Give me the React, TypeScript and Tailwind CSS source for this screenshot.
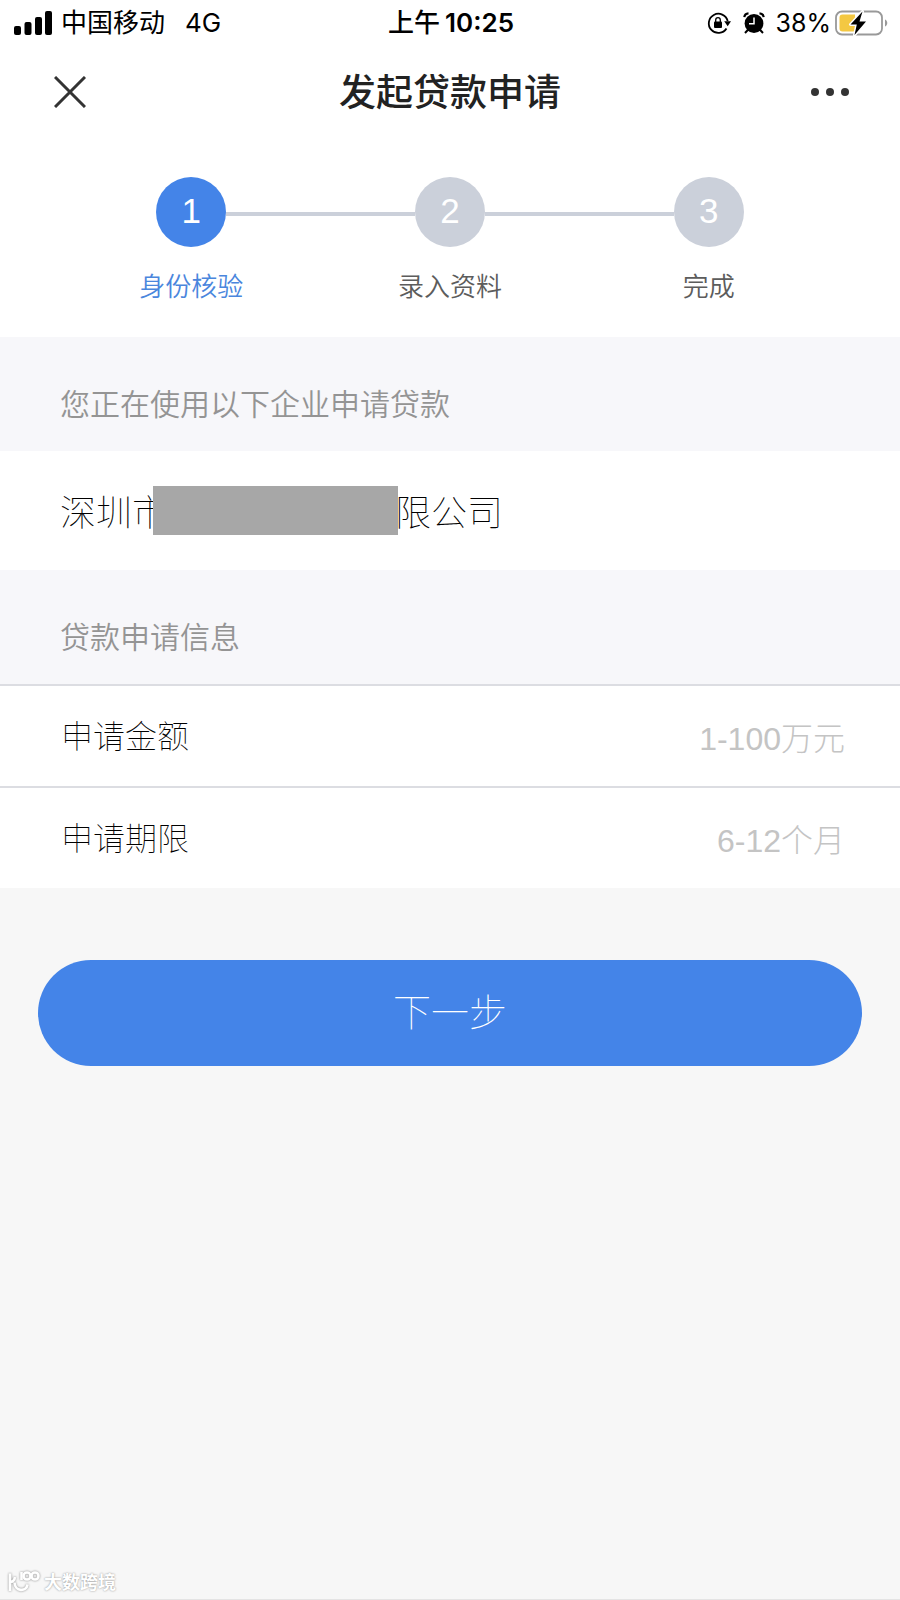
import React from "react";

const steps = [
  { n: 1, label: "身份核验" },
  { n: 2, label: "录入资料" },
  { n: 3, label: "完成" },
];

const fields = [
  { id: "amount", label: "申请金额", hint: "1-100万元" },
  { id: "term", label: "申请期限", hint: "6-12个月" },
];

function StatusBar() {
  return (
    <div className="grid h-[46px] grid-cols-[1fr_auto_1fr] items-center pr-3 pl-[14px] font-['Inter','Noto_Sans_CJK_SC',sans-serif] text-[26px] leading-none text-black">
      <div className="flex items-center">
        <svg className="mr-[9px] h-6 w-[38px]" viewBox="0 0 38 24" aria-hidden="true">
          <rect x="0" y="15" width="7" height="9" rx="2" />
          <rect x="10.500" y="11" width="7" height="13" rx="2" />
          <rect x="21" y="6" width="7" height="18" rx="2" />
          <rect x="31" y="0" width="7" height="24" rx="2" />
        </svg>
        <span className="mr-5">中国移动</span>
        <span>4G</span>
      </div>
      <div className="flex items-center gap-[5px] font-semibold">
        <span className="font-medium">上午</span>
        <span>10:25</span>
      </div>
      <div className="flex items-center justify-end">
        <svg className="mr-3 h-6 w-6" viewBox="0 0 24 24" fill="none" aria-hidden="true">
          <path d="M19.500 17.500A9.600 9.600 0 1 1 20.700 10" stroke="#000" strokeWidth="1.800" />
          <path d="M17.200 10.200h6.800l-3.300 5z" fill="#000" />
          <rect x="7" y="10.500" width="8" height="6.500" rx="1" fill="#000" />
          <path d="M8.700 11V9a2.300 2.300 0 0 1 4.600 0v2" stroke="#000" strokeWidth="1.300" />
        </svg>
        <svg className="mr-[11px] h-[22px] w-[22px]" viewBox="0 0 22 22" fill="none" aria-hidden="true">
          <circle cx="11" cy="11.500" r="9.400" fill="#000" />
          <path d="M1.300 5.200A4.500 4.500 0 0 1 5.500 1.300M20.700 5.200a4.500 4.500 0 0 0-4.200-3.900" stroke="#000" strokeWidth="2.200" />
          <path d="M4.800 18l-2.800 3M17.200 18l2.800 3" stroke="#000" strokeWidth="2" />
          <path d="M11 5.500v6.300H6" stroke="#fff" strokeWidth="1.500" />
        </svg>
        <span className="mr-1 text-[25px]">38%</span>
        <svg className="h-[26px] w-[53px]" viewBox="0 0 53 26" fill="none" aria-hidden="true">
          <rect x="1" y="1.500" width="46" height="23" rx="6" stroke="#999" strokeWidth="1.800" />
          <path d="M50 9.500c3 1.200 3 5.800 0 7z" fill="#999" />
          <path d="M7.500 4.500H20v17H7.500a3 3 0 0 1-3-3v-11a3 3 0 0 1 3-3z" fill="#f4c842" />
          <path d="M27.500 1.500L15.500 14.500h6.300L19.500 25 31 11.500h-6.500z" fill="#000" stroke="#fff" strokeWidth="3" strokeLinejoin="round" paintOrder="stroke" />
        </svg>
      </div>
    </div>
  );
}

function NavBar() {
  return (
    <header className="grid h-[92px] grid-cols-[1fr_auto_1fr] items-center px-[50px]">
      <button type="button" aria-label="关闭" className="flex h-10 w-10 items-center justify-center">
        <svg className="h-8 w-8" viewBox="0 0 32 32" aria-hidden="true">
          <path d="M1 1L31 31M31 1L1 31" stroke="#333" strokeWidth="3" />
        </svg>
      </button>
      <h1 className="pt-0.5 text-[37px] leading-none font-medium text-[#222]">发起贷款申请</h1>
      <button type="button" aria-label="更多" className="flex h-10 w-10 items-center justify-center justify-self-end">
        <svg className="h-2 w-10" viewBox="0 0 40 8" fill="#333" aria-hidden="true">
          <circle cx="5" cy="4" r="4" />
          <circle cx="20" cy="4" r="4" />
          <circle cx="35" cy="4" r="4" />
        </svg>
      </button>
    </header>
  );
}

function Steps() {
  return (
    <ol className="grid grid-cols-3 px-[62px] pt-[39px] pb-[30px]">
      {steps.map((s, i) => (
        <li key={s.n} className="flex flex-col items-center">
          <div className="flex w-full items-center">
            <span className={i === 0 ? "mt-1 h-1 flex-1" : "mt-1 h-1 flex-1 bg-[#cbd0da]"} />
            <span
              className={
                i === 0
                  ? "flex h-[70px] w-[70px] items-center justify-center rounded-full bg-[#4484e8] pb-1 text-[35px] leading-none text-white"
                  : "flex h-[70px] w-[70px] items-center justify-center rounded-full bg-[#cbd0da] pb-1 text-[35px] leading-none text-white"
              }
            >
              {s.n}
            </span>
            <span className={i === 2 ? "mt-1 h-1 flex-1" : "mt-1 h-1 flex-1 bg-[#cbd0da]"} />
          </div>
          <span
            className={
              i === 0
                ? "mt-5 text-[26px] leading-10 font-[350] text-[#4a86dd]"
                : "mt-5 text-[26px] leading-10 font-[350] text-[#5c5c5c]"
            }
          >
            {s.label}
          </span>
        </li>
      ))}
    </ol>
  );
}

function SectionTitle({ children }: { children: React.ReactNode }) {
  return (
    <h2 className="bg-[#f7f7fa] px-[60px] pt-[46px] pb-6 text-[30px] leading-[44px] font-[350] text-[#949494]">
      {children}
    </h2>
  );
}

export default function App() {
  return (
    <div className="flex min-h-screen flex-col bg-[#f7f7f7] font-['Liberation_Sans','Noto_Sans_CJK_SC',sans-serif]">
      <div className="bg-white">
        <StatusBar />
        <NavBar />
        <Steps />
      </div>
      <main>
        <SectionTitle>您正在使用以下企业申请贷款</SectionTitle>
        <p className="flex h-[119px] items-center bg-white px-[60px] font-['Noto_Sans_CJK_SC',sans-serif] text-[36px] leading-none font-thin text-black">
          <span className="pb-0.5">深圳市</span>
          <span className="z-10 -mr-[3px] -ml-[15px] h-[49px] w-[245px] bg-[#a7a7a7]" />
          <span className="pb-0.5">限公司</span>
        </p>
        <SectionTitle>贷款申请信息</SectionTitle>
        <form>
          {fields.map((f) => (
            <div key={f.id} className="flex h-[102px] items-center border-t-2 border-[#dcdde2] bg-white pr-[55px] pl-[61px]">
              <label htmlFor={f.id} className="pt-0.5 text-[32px] leading-none font-thin text-black">
                {f.label}
              </label>
              <input
                id={f.id}
                type="text"
                placeholder={f.hint}
                className="mt-1.5 min-w-0 flex-1 bg-transparent text-right text-[32px] font-light text-[#333] outline-none placeholder:text-[#c4c4c4]"
              />
            </div>
          ))}
          <div className="px-[38px] pt-[72px]">
            <button type="button" className="h-[106px] w-full rounded-full bg-[#4484e8] text-[38px] leading-none font-thin text-white">
              下一步
            </button>
          </div>
        </form>
      </main>
      <footer className="mt-auto flex items-center gap-1 border-b border-[#e4e4e4] px-2 pb-1 text-white">
        <svg className="h-6 w-8 drop-shadow-[0_0_1px_#888]" viewBox="0 0 32 24" fill="none" stroke="#fff" strokeWidth="2.600" aria-hidden="true">
          <path d="M2 3.500V21M2 12c2.500 0 4.500-1.500 5-5M6.500 12.500c.5 9.500 12 9.500 13 2" />
          <path d="M13.500 2v8" />
          <circle cx="19" cy="6" r="3.500" />
          <circle cx="27" cy="6" r="3.500" />
        </svg>
        <span className="pt-0.5 text-[18px] leading-6 font-bold [text-shadow:0_0_2px_#888]">大数跨境</span>
      </footer>
    </div>
  );
}
